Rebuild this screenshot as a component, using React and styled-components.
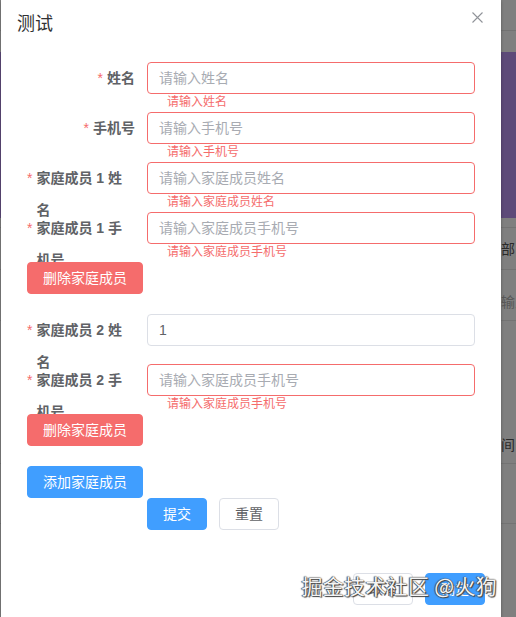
import React from 'react'
import styled, { createGlobalStyle, css } from 'styled-components'

const GlobalStyle = createGlobalStyle`
  html, body {
    margin: 0;
    padding: 0;
  }
  body {
    width: 516px;
    height: 617px;
    overflow: hidden;
    font-family: "Liberation Sans", "Noto Sans CJK SC", sans-serif;
  }
  * {
    box-sizing: border-box;
  }
`

// Data
const baseFields = [
  { label: '姓名', placeholder: '请输入姓名', error: '请输入姓名' },
  { label: '手机号', placeholder: '请输入手机号', error: '请输入手机号' },
]

const members = [
  { index: 1, name: '', phone: '' },
  { index: 2, name: '1', phone: '' },
]

const FormRow = ({ label, placeholder, value, error }) => (
  <Item>
    <Label>{label}</Label>
    <Content>
      <Input placeholder={placeholder} defaultValue={value} $error={!!error} />
      {error && <ErrorText>{error}</ErrorText>}
    </Content>
  </Item>
)

const App = () => {
  return (
    <Page>
      <GlobalStyle />
      {/* page behind the modal */}
      <TopBar />
      <SubNav />
      <Banner />
      <BgRow $h={10} />
      <BgRow $h={42}>全部</BgRow>
      <BgRow $h={14} $line={false} />
      <BgRow $h={37} $muted>请输入</BgRow>
      <BgRow $h={105} $line={false} />
      <BgRow $h={38}>时间</BgRow>
      <BgRow $h={60} />

      <Overlay>
        <Dialog>
          <Header>
            <Title>测试</Title>
            <Close aria-label="close">
              <svg width="11" height="11" viewBox="0 0 11 11">
                <path d="M0.5 0.5 L10.5 10.5 M10.5 0.5 L0.5 10.5" stroke="#909399" strokeWidth="1.1" fill="none" />
              </svg>
            </Close>
          </Header>
          <Body>
            {baseFields.map((f) => (
              <FormRow key={f.label} label={f.label} placeholder={f.placeholder} error={f.error} />
            ))}
            {members.map((m) => (
              <React.Fragment key={m.index}>
                <FormRow
                  label={`家庭成员 ${m.index} 姓名`}
                  placeholder="请输入家庭成员姓名"
                  value={m.name}
                  error={m.name ? '' : '请输入家庭成员姓名'}
                />
                <FormRow
                  label={`家庭成员 ${m.index} 手机号`}
                  placeholder="请输入家庭成员手机号"
                  value={m.phone}
                  error={m.phone ? '' : '请输入家庭成员手机号'}
                />
                <ButtonLine $gap={20}>
                  <Button $variant="danger">删除家庭成员</Button>
                </ButtonLine>
              </React.Fragment>
            ))}
            <ButtonLine $gap={0}>
              <Button $variant="primary">添加家庭成员</Button>
            </ButtonLine>
            <Item>
              <Content $offset>
                <Button $variant="primary">提交</Button>
                <Button>重置</Button>
              </Content>
            </Item>
          </Body>
          <Footer>
            <Button>取消</Button>
            <Button $variant="primary">确定</Button>
          </Footer>
        </Dialog>
      </Overlay>
      <Watermark>掘金技术社区 @火狗</Watermark>
    </Page>
  )
}

const Page = styled.div`
  position: relative;
  width: 516px;
  height: 617px;
  overflow: hidden;
  background: #fff;
`

const TopBar = styled.div`
  height: 31px;
  border-bottom: 1px solid #e4e4e4;
`

const SubNav = styled.div`
  height: 21px;
`

const Banner = styled.div`
  height: 166px;
  background: #bb95f3;
`

const BgRow = styled.div`
  height: ${(p) => p.$h}px;
  padding-left: 487px;
  font-size: 14px;
  line-height: ${(p) => p.$h}px;
  white-space: nowrap;
  color: ${(p) => (p.$muted ? '#b0b0b0' : '#555')};
  border-bottom: ${(p) => (p.$line === false ? 'none' : '1px solid #e6e6e6')};
`

const Overlay = styled.div`
  position: absolute;
  inset: 0;
  background: rgba(0, 0, 0, 0.5);
`

const Dialog = styled.div`
  position: absolute;
  top: 0;
  left: 1px;
  width: 500px;
  background: #fff;
  box-shadow: 0 1px 3px rgba(0, 0, 0, 0.3);
`

const Header = styled.div`
  position: relative;
  padding: 12px 16px 9px;
`

const Title = styled.span`
  font-size: 18px;
  line-height: 24px;
  color: #303133;
`

const Close = styled.button`
  position: absolute;
  top: 12px;
  right: 18px;
  width: 11px;
  height: 11px;
  padding: 0;
  border: none;
  background: none;
  display: flex;
`

const Body = styled.div`
  padding: 17px 26px 15px;
`

const Item = styled.div`
  display: flex;
  margin-bottom: 18px;
`

const Label = styled.label`
  display: inline-flex;
  flex: 0 0 auto;
  justify-content: flex-end;
  align-items: flex-start;
  width: 120px;
  height: 32px;
  padding-right: 12px;
  font-size: 14px;
  font-weight: bold;
  line-height: 32px;
  color: #606266;

  &::before {
    content: '*';
    color: #f56c6c;
    font-weight: normal;
    margin-right: 4px;
  }
`

const Content = styled.div`
  position: relative;
  flex: 1;
  display: flex;
  gap: 12px;
  margin-left: ${(p) => (p.$offset ? '120px' : '0')};
`

const Input = styled.input`
  width: 100%;
  height: 32px;
  padding: 0 11px;
  border: 1px solid ${(p) => (p.$error ? '#f56c6c' : '#dcdfe6')};
  border-radius: 4px;
  outline: none;
  font-family: inherit;
  font-size: 14px;
  color: #606266;
  background: #fff;

  &::placeholder {
    color: #a8abb2;
  }
`

const ErrorText = styled.div`
  position: absolute;
  top: 100%;
  left: 0;
  padding: 2px 0 0 20px;
  font-size: 12px;
  line-height: 1;
  color: #f56c6c;
`

const ButtonLine = styled.div`
  display: flex;
  margin-bottom: ${(p) => p.$gap}px;
`

const variants = {
  danger: css`
    background: #f56c6c;
    border-color: #f56c6c;
    color: #fff;
  `,
  primary: css`
    background: #409eff;
    border-color: #409eff;
    color: #fff;
  `,
  default: css`
    background: #fff;
    border-color: #dcdfe6;
    color: #606266;
  `,
}

const Button = styled.button`
  height: 32px;
  padding: 0 15px;
  border: 1px solid;
  border-radius: 4px;
  font-family: inherit;
  font-size: 14px;
  line-height: 30px;
  white-space: nowrap;
  cursor: pointer;
  ${(p) => variants[p.$variant || 'default']}
`

const Footer = styled.div`
  display: flex;
  justify-content: flex-end;
  gap: 12px;
  padding: 10px 16px 20px;
`

const Watermark = styled.div`
  position: absolute;
  right: 19px;
  bottom: 20px;
  font-family: "Noto Sans CJK SC", sans-serif;
  font-size: 21px;
  line-height: 24px;
  letter-spacing: 0.3px;
  color: #f4f4f4;
  text-shadow: 0 0 1px #222, 1px 1px 1px #444, -1px 0 1px #555;
  pointer-events: none;
`

export default App
